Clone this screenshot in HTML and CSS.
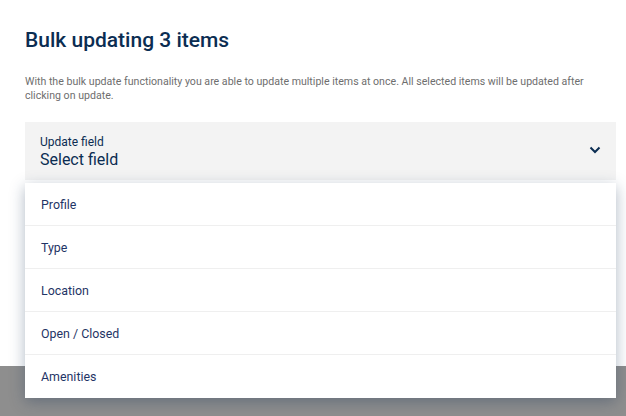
FILE: index.html
```html
<!DOCTYPE html>
<html lang="en">
<head>
    <meta charset="UTF-8">
    <title>Bulk update</title>
    <link rel="stylesheet" href="styles.css">
</head>
<body>
    <div class="modal">
        <h1 class="title">Bulk updating 3 items</h1>
        <p class="description">With the bulk update functionality you are able to update multiple items at once. All selected items will be updated after clicking on update.</p>

        <div class="field">
            <div class="select">
                <div class="select-text">
                    <div class="select-label">Update field</div>
                    <div class="select-value">Select field</div>
                </div>
                <svg class="chevron" width="12" height="8" viewBox="0 0 12 8">
                    <path d="M1.5 1.5 L6 6 L10.5 1.5" fill="none" stroke="currentColor" stroke-width="2"/>
                </svg>
            </div>
            <ul class="menu">
                <li class="menu-item">Profile</li>
                <li class="menu-item">Type</li>
                <li class="menu-item">Location</li>
                <li class="menu-item">Open / Closed</li>
                <li class="menu-item">Amenities</li>
            </ul>
        </div>
    </div>
    <div class="backdrop"></div>
</body>
</html>
```

FILE: styles.css
```css
:root {
    --navy: #0b2d52;
    --menu-text: #1f3566;
    --muted: #6e6e6e;
    --field-bg: #f3f3f3;
    --divider: #efefef;
    --backdrop: #8e8e8e;
}

html, body {
    height: 100%;
}

body {
    margin: 0;
    font-family: Roboto, sans-serif;
    background-color: var(--backdrop);
    display: flex;
    flex-direction: column;
    overflow: hidden;
}

.modal {
    background-color: #fff;
    height: 366px;
    padding: 26px 10px 0 25px;
    box-sizing: border-box;
}

.title {
    margin: 0;
    font-size: 21px;
    font-weight: 500;
    line-height: 28px;
    color: var(--navy);
}

.description {
    margin: 21px 0 0;
    font-size: 10.6px;
    line-height: 14px;
    color: var(--muted);
    padding-right: 20px;
}

.field {
    position: relative;
    margin-top: 19px;
}

.select {
    height: 58px;
    background-color: var(--field-bg);
    display: flex;
    align-items: center;
    justify-content: space-between;
    padding: 0 15px;
    box-sizing: border-box;
}

.select-text {
    padding-top: 2px;
}

.select-label {
    font-size: 12px;
    line-height: 16px;
    color: var(--navy);
}

.select-value {
    font-size: 16px;
    line-height: 20px;
    color: var(--navy);
}

.chevron {
    color: var(--navy);
    margin-bottom: 2px;
}

.menu {
    position: absolute;
    top: 61px;
    left: 0;
    right: 0;
    margin: 0;
    padding: 0;
    list-style: none;
    background-color: #fff;
    box-shadow: 0 4px 14px rgba(30, 55, 90, 0.35);
}

.menu-item {
    height: 42px;
    display: flex;
    align-items: center;
    padding-left: 16px;
    font-size: 12.4px;
    color: var(--menu-text);
}

.menu-item + .menu-item {
    border-top: 1px solid var(--divider);
}

.menu-item:last-child {
    height: 43px;
}

.backdrop {
    flex: 1;
}
```
